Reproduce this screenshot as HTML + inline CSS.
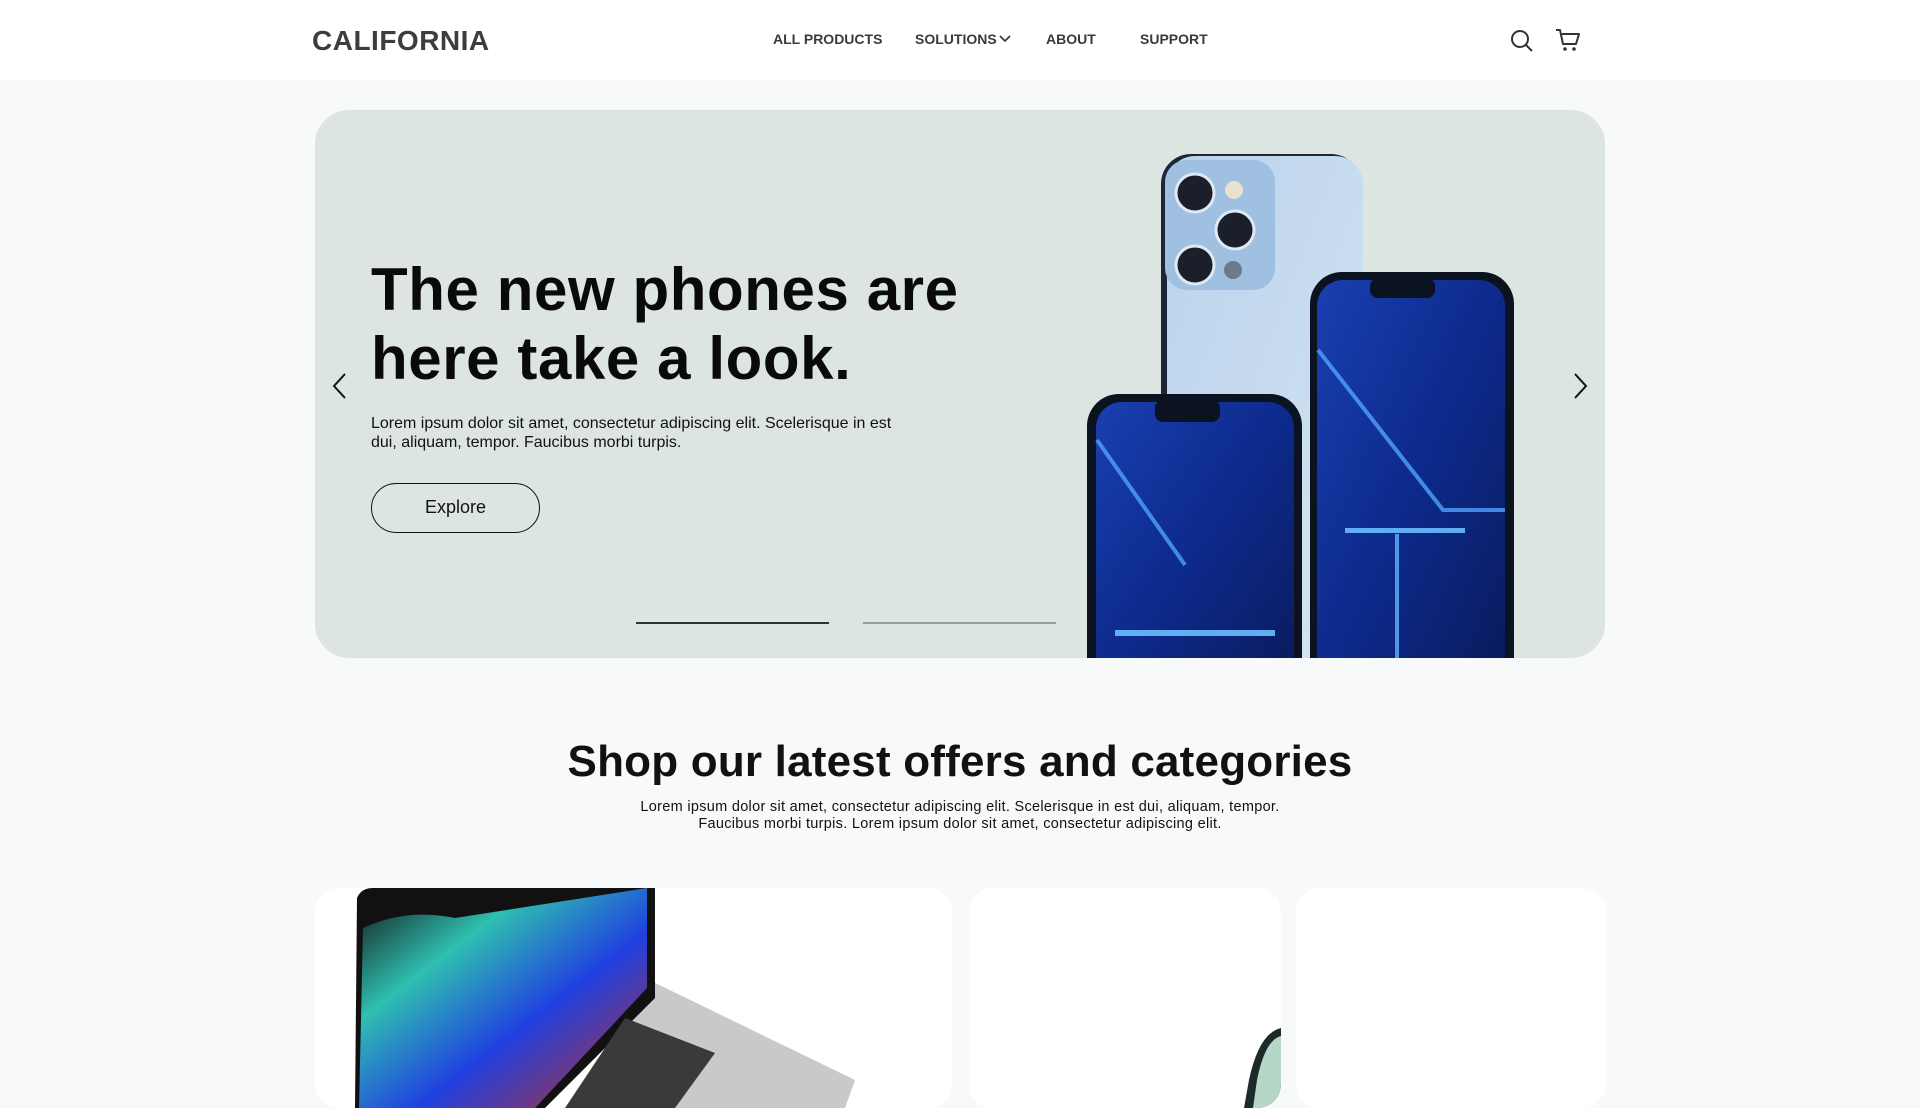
<!DOCTYPE html>
<html><head><meta charset="utf-8">
<style>
*{margin:0;padding:0;box-sizing:border-box}
html,body{width:1920px;height:1080px;overflow:hidden;background:#f7f9fb;font-family:"Liberation Sans",sans-serif;color:#111}
.hdr{position:absolute;left:0;top:0;width:1920px;height:80px;background:#fff}
.logo{position:absolute;left:312px;top:25px;font-size:28px;font-weight:bold;color:#3d3d3d;letter-spacing:0.5px}
.nav a{position:absolute;top:31px;font-size:14px;font-weight:bold;color:#3a3a3a;text-decoration:none}
.hero{position:absolute;left:315px;top:110px;width:1290px;height:548px;background:#dde5e2;border-radius:34px;overflow:hidden}
h1{position:absolute;left:56px;top:145px;font-size:60px;line-height:69px;font-weight:bold;letter-spacing:0.6px;color:#0a0a0a}
.hp{position:absolute;left:56px;top:304px;font-size:16px;line-height:19px;color:#111;width:545px}
.btn{position:absolute;left:56px;top:373px;width:169px;height:50px;border:1.5px solid #111;border-radius:25px;font-size:18px;text-align:center;line-height:47px;color:#111}
.ind{position:absolute;top:512px;height:2px;width:193px}
.sec{position:absolute;left:0;width:1920px;text-align:center}
.card{position:absolute;top:888px;height:220px;background:#fff;border-radius:24px;overflow:hidden}
</style></head><body>
<div class="hdr">
  <div class="logo">CALIFORNIA</div>
  <div class="nav">
    <a style="left:773px">ALL PRODUCTS</a>
    <a style="left:915px">SOLUTIONS</a>
    <svg style="position:absolute;left:999px;top:34px" width="12" height="9" viewBox="0 0 12 9"><path d="M1 2l5 5 5-5" fill="none" stroke="#333" stroke-width="1.6"/></svg>
    <a style="left:1046px">ABOUT</a>
    <a style="left:1140px">SUPPORT</a>
  </div>
  <svg style="position:absolute;left:1509px;top:28px" width="26" height="26" viewBox="0 0 26 26"><circle cx="11" cy="11" r="8" fill="none" stroke="#333" stroke-width="2"/><path d="M17 17l6 6" stroke="#333" stroke-width="2"/></svg>
  <svg style="position:absolute;left:1554px;top:27px" width="28" height="26" viewBox="0 0 28 26"><path d="M2 3h4l3 14h13l3-10H8" fill="none" stroke="#333" stroke-width="2" stroke-linejoin="round"/><circle cx="11" cy="22" r="1.8" fill="#333"/><circle cx="20" cy="22" r="1.8" fill="#333"/></svg>
</div>

<div class="hero">
  <h1>The new phones are<br>here take a look.</h1>
  <div class="hp">Lorem ipsum dolor sit amet, consectetur adipiscing elit. Scelerisque in est dui, aliquam, tempor. Faucibus morbi turpis.</div>
  <div class="btn">Explore</div>
  <div class="ind" style="left:321px;background:#333"></div>
  <div class="ind" style="left:548px;background:#999"></div>
  <svg style="position:absolute;left:16px;top:262px" width="18" height="28" viewBox="0 0 18 28"><path d="M14 2L3 14l11 12" fill="none" stroke="#111" stroke-width="2"/></svg>
  <svg style="position:absolute;left:1256px;top:262px" width="18" height="28" viewBox="0 0 18 28"><path d="M4 2l11 12L4 26" fill="none" stroke="#111" stroke-width="2"/></svg>
  <svg style="position:absolute;left:0;top:0" width="1290" height="548" viewBox="0 0 1290 548">
    <defs>
      <linearGradient id="scr" x1="0" y1="0" x2="1" y2="1"><stop offset="0" stop-color="#1a3fb0"/><stop offset=".5" stop-color="#0d2a8c"/><stop offset="1" stop-color="#0a1a5a"/></linearGradient>
      <linearGradient id="back" x1="0" y1="0" x2="1" y2="1"><stop offset="0" stop-color="#b9d2ec"/><stop offset="1" stop-color="#d6e5f3"/></linearGradient>
    </defs>
    <rect x="846" y="44" width="200" height="520" rx="30" fill="#1b2638"/>
    <rect x="852" y="46" width="196" height="520" rx="28" fill="url(#back)"/>
    <rect x="850" y="50" width="110" height="130" rx="22" fill="#9fc0e0"/>
    <circle cx="880" cy="83" r="19" fill="#1a1f2a" stroke="#dfe9f3" stroke-width="3"/>
    <circle cx="920" cy="120" r="19" fill="#1a1f2a" stroke="#dfe9f3" stroke-width="3"/>
    <circle cx="880" cy="155" r="19" fill="#1a1f2a" stroke="#dfe9f3" stroke-width="3"/>
    <circle cx="919" cy="80" r="9" fill="#e8e0d0"/>
    <circle cx="918" cy="160" r="9" fill="#6e7a88"/>
    <rect x="995" y="162" width="204" height="420" rx="32" fill="#0b1220"/>
    <rect x="1002" y="170" width="188" height="410" rx="26" fill="url(#scr)"/>
    <rect x="1055" y="168" width="65" height="20" rx="8" fill="#0b1220"/>
    <path d="M1003 240 L1128 400 L1190 400" fill="none" stroke="#4ea2ff" stroke-width="4" opacity=".8"/>
    <rect x="1080" y="424" width="4" height="124" fill="#5fb4ff" opacity=".8"/>
    <rect x="1030" y="418" width="120" height="5" fill="#6bbcff" opacity=".9"/>
    <rect x="772" y="284" width="215" height="300" rx="32" fill="#0b1220"/>
    <rect x="781" y="292" width="198" height="290" rx="26" fill="url(#scr)"/>
    <rect x="840" y="290" width="65" height="22" rx="8" fill="#0b1220"/>
    <path d="M782 330 L870 455" stroke="#4ea2ff" stroke-width="4" opacity=".8"/>
    <rect x="800" y="520" width="160" height="6" fill="#6bbcff" opacity=".9"/>
  </svg>
</div>

<div class="sec" style="top:737px;font-size:44px;font-weight:bold;letter-spacing:0.2px;color:#111">Shop our latest offers and categories</div>
<div class="sec" style="top:799px;font-size:14.5px;line-height:17px;letter-spacing:0.3px;color:#111">Lorem ipsum dolor sit amet, consectetur adipiscing elit. Scelerisque in est dui, aliquam, tempor.<br>Faucibus morbi turpis. Lorem ipsum dolor sit amet, consectetur adipiscing elit.</div>

<div class="card" style="left:315px;width:637px">
  <svg width="637" height="220" viewBox="0 0 637 220">
    <defs><linearGradient id="lp" x1="0" y1="0" x2="1" y2="1"><stop offset="0" stop-color="#111"/><stop offset=".3" stop-color="#2fbfb0"/><stop offset=".6" stop-color="#2040e0"/><stop offset="1" stop-color="#c03020"/></linearGradient></defs>
    <polygon points="330,90 540,192 530,220 260,220" fill="#c9c9c9"/>
    <path d="M42 10 Q46 0 58 0 L340 0 L340 110 L230 220 L40 220 Z" fill="#111"/>
    <path d="M48 40 Q90 20 140 30 L332 0 L332 100 L220 220 L44 220 Z" fill="url(#lp)"/>
    <polygon points="310,130 400,165 360,220 250,220" fill="#3a3a3a"/>
  </svg>
</div>
<div class="card" style="left:969px;width:312px">
  <svg width="312" height="220" viewBox="0 0 312 220"><path d="M312 140 Q290 145 280 192 L275 220 L312 220 Z" fill="#1c2a2a"/><path d="M312 148 Q296 152 288 192 L284 220 L312 220 Z" fill="#b6d6c8"/></svg>
</div>
<div class="card" style="left:1296px;width:310px"></div>
</body></html>
